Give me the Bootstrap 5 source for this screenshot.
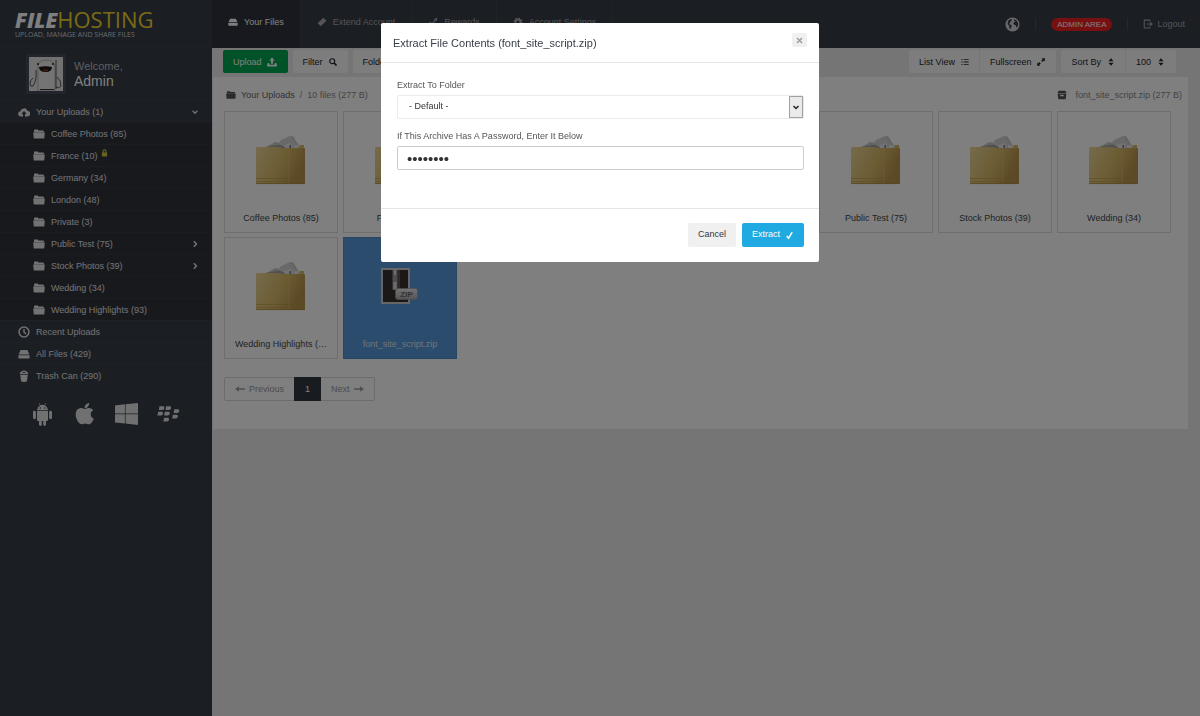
<!DOCTYPE html>
<html lang="en">
<head>
<meta charset="utf-8">
<meta name="viewport" content="width=device-width, initial-scale=1">
<title>FileHosting - Your Files</title>
<link href="https://cdn.jsdelivr.net/npm/bootstrap@5.3.0/dist/css/bootstrap.min.css" rel="stylesheet">
<style>
  body { font-family: "Liberation Sans", Arial, sans-serif; font-size: 9px; line-height: 14px; color: #555; background: #ebebeb; }
  a { text-decoration: none; color: inherit; }
  svg.ico { width: 10px; height: 10px; fill: currentColor; flex: none; }

  /* Sidebar */
  .side { width: 212px; background: #363c46; color: #e4e5e7; }
  .side-head { height: 47px; padding: 9px 15px 0; border-bottom: 1px solid #3e444f; }
  .logo { font: 400 22px/20px "Open Sans", sans-serif; color: #f2d62c; display: block; white-space: nowrap; }
  .logo b { font-weight: 800; font-style: italic; color: #fff; font-size: 21px; }
  .tagline { font: 7px/10px "Open Sans", sans-serif; color: #d4d6d9; white-space: nowrap; }
  .side-user { height: 53px; padding-left: 26px; }
  .avatar { width: 40px; height: 40px; border: 3px solid #454b57; background: #e2e2e2; }
  .side-user .hello { font-size: 11px; line-height: 14px; color: #b9bcc2; }
  .side-user .who { font-size: 14px; line-height: 16px; color: #fff; }
  .side-item { height: 22px; padding: 0 12px 0 18px; border-top: 1px solid #3e444f; }
  .side-item svg.ico { width: 12px; height: 12px; margin-right: 6px; }
  .side-sub { background: #2e323b; }
  .side-sub .side-item { padding-left: 33px; border-color: #363b45; }
  .side-item svg.chev { width: 8px; height: 8px; margin: 0 1px 0 auto; }
  .side-item svg.lock { width: 7px; height: 8px; margin: -6px 0 0 3px; color: #c9c840; }
  .platforms { padding: 16px 31px; gap: 19px; color: #e0e1e3; }
  .platforms svg { width: 23px; height: 24px; fill: currentColor; }
  .platforms .eye { fill: #363c46; }

  /* Top bar */
  .top { height: 48px; background: #363c46; color: #a6aab2; }
  .top .tab { padding: 0 16px 4px; border-right: 1px solid #3e444f; gap: 6px; }
  .top .tab.active { background: #2e333c; color: #fff; }
  .top .side-links { padding-right: 15px; gap: 15px; }
  .pill { background: #f01e22; color: #fff; font-size: 8px; line-height: 13px; padding: 0 6px; border-radius: 7px; }
  .sep { width: 1px; height: 12px; background: #49505c; }

  /* Toolbar */
  .content { margin-right: 12px; }
  .tools { padding: 2px 12px 4px 11px; }
  .tools .set { gap: 5px; }
  .tools .btn { font-size: 9px; line-height: 13px; padding: 1px 11px 0 10px; border: 0; border-radius: 2px; background: #fbfbfb; color: #22272f; display: inline-flex; align-items: center; gap: 6px; height: 23px; }
  .tools .btn svg.ico { width: 8px; height: 8px; }
  .tools .btn-upload { background: #00a651; color: #fff; gap: 5px; }
  .tools .btn-upload svg.ico { width: 10px; height: 10px; }
  .tools .btn-group .btn + .btn { border-left: 1px solid #ebebeb; }

  /* File list */
  .panel { background: #fff; margin-left: 1px; padding: 10px 6px 28px 11px; color: #888; }
  .crumbs { line-height: 16px; padding-left: 2px; margin-bottom: 8px; }
  .crumbs .trail { gap: 5px; }
  .crumbs a { color: #666; }
  .crumbs svg.ico { color: #555; }
  .tiles { gap: 4px 5px; }
  .tile { width: 114px; height: 122px; border: 1px solid #dcdcdc; padding: 20px 10px 0; color: #444; text-align: center; }
  .tile svg { width: 56px; height: 60px; display: block; margin: 0 auto 19px; }
  .tile.active { background: #5799da; border-color: #4f8dc9; color: #dfe6ee; }
  .pagination { --bs-pagination-font-size: 9px; --bs-pagination-padding-x: 10px; --bs-pagination-padding-y: 4px; --bs-pagination-color: #999; --bs-pagination-border-color: #d9d9d9; --bs-pagination-active-bg: #303641; --bs-pagination-active-border-color: #303641; --bs-pagination-border-radius: 2px; margin: 18px 0 0; }
  .page-link { line-height: 14px; display: flex; align-items: center; gap: 4px; }

  /* Extract dialog */
  .modal-dialog { max-width: 438px; margin: 23px auto; }
  .modal-content { border: 0; border-radius: 2px; color: #555; }
  .modal-header { padding: 10px 12px 9px; height: 40px; border-color: #e5e5e5; align-items: flex-start; }
  .modal-title { font-size: 11px; line-height: 20px; color: #373e4a; }
  .btn-x { width: 15px; height: 14px; padding: 0; border: 0; border-radius: 2px; background: #f0f0f1; color: #999; display: flex; align-items: center; justify-content: center; }
  .modal-body { padding: 15px 15px 38px 16px; }
  .modal-body .form-label { margin: 0 0 3px; line-height: 14px; display: block; }
  .modal-body .field { height: 24px; border-radius: 2px; padding: 0 9px; color: #333; }
  .modal-body .form-select { font-size: 9px; border: 1px solid #ebebeb; margin-bottom: 10px; padding-left: 11px;
    background: #fff url("data:image/svg+xml,%3Csvg xmlns='http://www.w3.org/2000/svg' width='14' height='22'%3E%3Crect x='.5' y='.5' width='13' height='21' fill='%23eaeaea' stroke='%23a0a0a0'/%3E%3Cpath d='M4.500 10 7 12.500l2.500-2.500' fill='none' stroke='%23222' stroke-width='1.500'/%3E%3C/svg%3E") no-repeat right 0 center / 14px 22px; }
  .modal-body .form-control { font-size: 15px; border: 1px solid #ccc; }
  .modal-footer { padding: 14px 15px 15px; border-color: #e5e5e5; gap: 6px; }
  .modal-footer .btn { margin: 0; border: 0; border-radius: 2px; font-size: 9px; height: 24px; padding: 0 10px; display: flex; align-items: center; gap: 5px; }
  .modal-footer svg.ico { width: 9px; height: 9px; }
  .btn-cancel { background: #f0f0f1; color: #303641; }
  .btn-extract { background: #21a9e1; color: #fff; }
</style>
</head>
<body>

<svg class="position-absolute" width="0" height="0" aria-hidden="true">
  <defs>
    <linearGradient id="gold" x1="0" y1="0" x2="1" y2=".35"><stop offset="0" stop-color="#ead698"/><stop offset=".6" stop-color="#d8b866"/><stop offset="1" stop-color="#b8924a"/></linearGradient>
    <linearGradient id="steel" x1="0" y1="0" x2="0" y2="1"><stop offset="0" stop-color="#e8e8e8"/><stop offset="1" stop-color="#aaa"/></linearGradient>
  </defs>
  <symbol id="i-drive" viewBox="0 0 12 12"><path d="M2.600 2h6.800L11.400 6.400H.6zM.4 7.200h11.200v2.500q0 .8-.8.8H1.200q-.8 0-.8-.8z"/></symbol>
  <symbol id="i-folder" viewBox="0 0 12 12"><path d="M1 2.300q0-.8.8-.8h2.700q.7 0 .9 1h4.800q.7 0 .7.800V4.200H1zM.2 4.600h11.600l-.5 5.400q0 .6-.7.600H1.400q-.7 0-.7-.6z"/></symbol>
  <symbol id="i-cloud" viewBox="0 0 12 12"><path d="M5 10.500H2.800A2.600 2.600 0 0 1 2.500 5.300 3.600 3.600 0 0 1 9.400 4.700 2.900 2.900 0 0 1 9.300 10.500H7V8h1.700L6 5 3.300 8H5z"/></symbol>
  <symbol id="i-clock" viewBox="0 0 12 12"><path fill-rule="evenodd" d="M6 .3a5.700 5.700 0 1 0 0 11.400A5.700 5.700 0 0 0 6 .3zm0 1.500a4.200 4.200 0 1 1 0 8.400 4.200 4.200 0 0 1 0-8.400zM5.300 3v3.400l2.300 2.100.9-1L6.700 5.800V3z"/></symbol>
  <symbol id="i-trash" viewBox="0 0 12 12"><path fill-rule="evenodd" d="M2 2.700Q6-1.600 10 2.700l.4 1.300H1.600zm2 .2h4Q6 1 4 2.900zM2.200 4.800h7.600L9 10.800Q8.900 12 6 12T3 10.800z"/></symbol>
  <symbol id="i-lock" viewBox="0 0 8 9"><path fill-rule="evenodd" d="M1 4h.6V2.600a2.400 2.400 0 0 1 4.800 0V4H7v4.500H1zm1.900 0h2.200V2.600a1.100 1.100 0 0 0-2.200 0z"/></symbol>
  <symbol id="i-down" viewBox="0 0 10 10"><path d="M2 3.500 5 6.500l3-3" fill="none" stroke="currentColor" stroke-width="1.700"/></symbol>
  <symbol id="i-right" viewBox="0 0 10 10"><path d="M3.500 1.500 6.800 5 3.500 8.500" fill="none" stroke="currentColor" stroke-width="1.900"/></symbol>
  <symbol id="i-ticket" viewBox="0 0 12 12"><path d="M7.600.8 9 2.200Q8.700 3.300 9.800 3l1.400 1.400-6.800 6.800L3 9.800Q3.300 8.700 2.200 9L.8 7.600z"/></symbol>
  <symbol id="i-chart" viewBox="0 0 12 12"><path d="M.5 10.500 2.600 6.400 5 8.300 9 3" fill="none" stroke="currentColor" stroke-width="1.400"/><path d="M7 2.500 11.200.8l-.8 4.400z"/></symbol>
  <symbol id="i-cog" viewBox="0 0 12 12"><circle cx="6" cy="6" r="3" fill="none" stroke="currentColor" stroke-width="2.200"/><circle cx="6" cy="6" r="4.600" fill="none" stroke="currentColor" stroke-width="1.600" stroke-dasharray="1.800 1.810"/></symbol>
  <symbol id="i-globe" viewBox="0 0 16 16"><path fill-rule="evenodd" d="M8 .5a7.500 7.500 0 1 0 0 15 7.500 7.500 0 0 0 0-15zM3 5.200 4 3.400 6.400 2.200l1 .5-.4 1.300-1.800 1.200.3 1.300L4.200 7.400l2.300 1.200.8 1.500-1 1.300-.5 1.900-1.100-1.700-.2-2L3 7.600zM9.800 2.400l2.500 1.200 1.300 2.200.5 2.200-.8 2.400-1.200.8-.6-2.400-2-.7L8.800 6.600 10 5.200l1.200.2-.8-1.200L9.400 3.500z"/></symbol>
  <symbol id="i-logout" viewBox="0 0 12 12"><path d="M8 3V1.300H1.500v9.400H8V9M4.500 6h6M8.600 3.900 10.800 6 8.600 8.100" fill="none" stroke="currentColor" stroke-width="1.300"/></symbol>
  <symbol id="i-upload" viewBox="0 0 12 12"><path d="M6 .5 9.300 4.300H7.200V8H4.800V4.300H2.700zM.3 7.500H3v1.800h6V7.500h2.700v4H.3z"/></symbol>
  <symbol id="i-search" viewBox="0 0 12 12"><circle cx="4.800" cy="4.800" r="3.700" fill="none" stroke="currentColor" stroke-width="1.800"/><path d="m7.400 7.400 3.800 3.800" stroke="currentColor" stroke-width="2.400"/></symbol>
  <symbol id="i-list" viewBox="0 0 12 12"><path d="M.5 1.700h2v1.400h-2zm3.500 0h7.500v1.400H4zM.5 5.300h2v1.400h-2zm3.500 0h7.500v1.400H4zM.5 8.900h2v1.400h-2zm3.500 0h7.500v1.400H4z"/></symbol>
  <symbol id="i-full" viewBox="0 0 12 12"><path d="M7 .5h4.800v4.800L10.300 3.800 8.200 5.900 6.300 4l2.200-2zM5 11.500H.2V6.700l1.500 1.500 2.100-2.100L5.700 8l-2.200 2z"/></symbol>
  <symbol id="i-sort" viewBox="0 0 12 12"><path d="m6 .2 3.800 4.600H2.200zM6 11.800 2.200 7.200h7.600z"/></symbol>
  <symbol id="i-archive" viewBox="0 0 12 12"><path fill-rule="evenodd" d="M2 1h8l1.400 2.600H.6zM.8 4.300h10.400l-.8 6.700H1.600zM4 5.600v2h4v-2z"/></symbol>
  <symbol id="i-check" viewBox="0 0 12 12"><path d="m2.200 6.600 2.600 3 4.800-8" fill="none" stroke="currentColor" stroke-width="2"/></symbol>
  <symbol id="i-prev" viewBox="0 0 12 12"><path d="M4.600 2.800v2.200h7.200v2H4.600v2.200L.2 6z"/></symbol>
  <symbol id="i-next" viewBox="0 0 12 12"><path d="M7.400 2.800v2.200H.2v2h7.200v2.200L11.800 6z"/></symbol>
  <symbol id="i-bigfolder" viewBox="0 0 56 60">
    <path d="M12 16 22 10l6 1 7-6 5-1 8 13z" fill="#c8c8ca"/>
    <path d="M28 8 37 4l9 13H22z" fill="#d2d2d4"/>
    <path d="M12 15 27 12.500l9 5H12z" fill="#a0a0a0"/>
    <path d="M31 13l7-2 2 7h-7zM41 13h4l1 5h-5z" fill="#e6e6ea"/>
    <path d="M36.500 13h1.500v4h-1.500z" fill="#77787c"/>
    <path d="M46.500 13h4.500v5h-4.500z" fill="#d6bb66"/>
    <path d="M3 16q0-1 1-1h22l4 1h21q1 0 1 1v35H3z" fill="url(#gold)"/>
    <path d="M3 46.500h49M3 49.500h49" stroke="#b8954a" stroke-width=".6"/>
    <path d="M36 18v33" stroke="#e0c377" stroke-width=".5"/>
    <path d="M3 51.600h49" stroke="#a88a42" stroke-width=".8"/>
  </symbol>
  <symbol id="i-zip" viewBox="0 0 56 60">
    <path d="M9 10h29v36H9z" fill="#cfcdcd"/><path d="M11 12h25v32H11z" fill="#3a3030"/>
    <path d="M20.500 12h5v20h-5z" fill="#9c9c9c"/><path d="M22 12h2v5h-2zM21.500 24h3v7h-3z" fill="#ddd"/><path d="M26 12h2v20h-2z" fill="#5c5556"/>
    <rect x="23.500" y="30.500" width="22" height="11" rx="2.500" fill="url(#steel)" stroke="#999" stroke-width=".6"/>
    <text x="34.500" y="39" text-anchor="middle" font-family="Liberation Sans" font-size="8" font-weight="bold" fill="#666">ZIP</text>
  </symbol>
</svg>

<div class="d-flex min-vh-100">
  <aside class="side flex-shrink-0">
    <div class="side-head">
      <a href="#" class="logo"><b>FILE</b>HOSTING</a>
      <div class="tagline">UPLOAD, MANAGE AND SHARE FILES</div>
    </div>
    <div class="side-user d-flex align-items-center gap-2">
      <svg class="avatar" viewBox="0 0 34 34" role="img" aria-label="Avatar">
        <path d="M9 34V12Q8 3 17 3t9 9v22z" fill="#e9e9e9" stroke="#999" stroke-width=".7"/>
        <path d="M7 13q1 10-3 16-3 1-3-2 0-4 3-6M27 3v29M28 20q4 3 4 9-2 3-5 1" fill="none" stroke="#444" stroke-width=".9"/>
        <path d="M10 10q6-1.500 13 0 0 5-6.500 5T10 10z" fill="#1c1616"/><path d="M13.500 13q3-1.200 6 0-3 2-6 0z" fill="#c33"/>
        <circle cx="9" cy="7" r="1" fill="#222"/><circle cx="24" cy="7" r="1" fill="#222"/><path d="M11 32.500h14" stroke="#333"/>
      </svg>
      <div><div class="hello">Welcome,</div><div class="who">Admin</div></div>
    </div>
    <nav>
      <a href="#" class="side-item d-flex align-items-center"><svg class="ico"><use href="#i-cloud"/></svg>Your Uploads (1)<svg class="ico chev"><use href="#i-down"/></svg></a>
      <div class="side-sub">
        <a href="#" class="side-item d-flex align-items-center"><svg class="ico"><use href="#i-folder"/></svg>Coffee Photos (85)</a>
        <a href="#" class="side-item d-flex align-items-center"><svg class="ico"><use href="#i-folder"/></svg>France (10)<svg class="ico lock"><use href="#i-lock"/></svg></a>
        <a href="#" class="side-item d-flex align-items-center"><svg class="ico"><use href="#i-folder"/></svg>Germany (34)</a>
        <a href="#" class="side-item d-flex align-items-center"><svg class="ico"><use href="#i-folder"/></svg>London (48)</a>
        <a href="#" class="side-item d-flex align-items-center"><svg class="ico"><use href="#i-folder"/></svg>Private (3)</a>
        <a href="#" class="side-item d-flex align-items-center"><svg class="ico"><use href="#i-folder"/></svg>Public Test (75)<svg class="ico chev"><use href="#i-right"/></svg></a>
        <a href="#" class="side-item d-flex align-items-center"><svg class="ico"><use href="#i-folder"/></svg>Stock Photos (39)<svg class="ico chev"><use href="#i-right"/></svg></a>
        <a href="#" class="side-item d-flex align-items-center"><svg class="ico"><use href="#i-folder"/></svg>Wedding (34)</a>
        <a href="#" class="side-item d-flex align-items-center"><svg class="ico"><use href="#i-folder"/></svg>Wedding Highlights (93)</a>
      </div>
      <a href="#" class="side-item d-flex align-items-center"><svg class="ico"><use href="#i-clock"/></svg>Recent Uploads</a>
      <a href="#" class="side-item d-flex align-items-center"><svg class="ico"><use href="#i-drive"/></svg>All Files (429)</a>
      <a href="#" class="side-item d-flex align-items-center"><svg class="ico"><use href="#i-trash"/></svg>Trash Can (290)</a>
    </nav>
    <div class="platforms d-flex align-items-center">
      <a href="#" aria-label="Android"><svg viewBox="0 0 23 24"><path d="M6 8.200q.3-3.400 3-4.700L7.800 1.300l.5-.3 1.200 2.200q2-.7 4 0L14.700 1l.5.3L14 3.500q2.700 1.300 3 4.700zM6 9h11v9q0 1-1 1h-1v3.500a1.400 1.400 0 0 1-2.800 0V19h-1.400v3.500a1.400 1.400 0 0 1-2.800 0V19H7q-1 0-1-1zM2 10.300a1.400 1.400 0 0 1 2.900 0v5.500a1.400 1.400 0 0 1-2.900 0zM18.100 10.300a1.400 1.400 0 0 1 2.900 0v5.500a1.400 1.400 0 0 1-2.900 0z"/><circle class="eye" cx="9.200" cy="6" r=".7"/><circle class="eye" cx="13.800" cy="6" r=".7"/></svg></a>
      <a href="#" aria-label="Apple"><svg viewBox="-52 16 480 495"><path d="M318.700 268.700c-.2-36.700 16.400-64.400 50-84.800-18.800-26.900-47.200-41.700-84.700-44.600-35.500-2.800-74.300 20.700-88.500 20.700-15 0-49.400-19.700-76.400-19.700C63.300 141.200 4 184.800 4 273.500q0 39.300 14.400 81.200c12.800 36.700 59 126.700 107.200 125.200 25.200-.6 43-17.900 75.800-17.900 31.800 0 48.300 17.900 76.400 17.900 48.600-.7 90.400-82.500 102.600-119.300-65.200-30.700-61.700-90-61.700-91.900zm-56.600-164.200c27.300-32.400 24.800-61.900 24-72.500-24.100 1.400-52 16.400-67.900 34.900-17.500 19.800-27.800 44.300-25.600 71.900 26.100 2 49.900-11.400 69.500-34.300z"/></svg></a>
      <a href="#" aria-label="Windows"><svg viewBox="0 0 23 24"><path d="M0 3.400 9.900 2.300v9.200H0zM10.600 2.200 23 .9v10.600H10.600zM0 12.300h9.900v9.200L0 20.400zM10.600 12.300H23v10.600l-12.400-1.300z"/></svg></a>
      <a href="#" aria-label="BlackBerry"><svg viewBox="0 0 23 24"><path d="M2.500 4.200h3.700q1.500 0 1.200 2T5 8H1.800zM9.200 4.200h3.700q1.500 0 1.200 2T11.700 8H8.500zM1.100 9.800h3.700q1.500 0 1.200 2t-2.400 1.800H.4zM7.900 9.800h3.700q1.500 0 1.200 2t-2.400 1.800H7.200zM17.300 7.200H21q1.500 0 1.200 2T19.800 11h-3.200zM15.900 12.800h3.700q1.500 0 1.200 2t-2.400 1.800h-3.200zM7.100 15.800h3.700q1.500 0 1.200 2t-2.400 1.800H6.400z"/></svg></a>
    </div>
  </aside>

  <div class="flex-grow-1 overflow-hidden">
    <header class="top d-flex justify-content-between">
      <nav class="d-flex">
        <a href="#" class="tab active d-flex align-items-center"><svg class="ico"><use href="#i-drive"/></svg>Your Files</a>
        <a href="#" class="tab d-flex align-items-center"><svg class="ico"><use href="#i-ticket"/></svg>Extend Account</a>
        <a href="#" class="tab d-flex align-items-center"><svg class="ico"><use href="#i-chart"/></svg>Rewards</a>
        <a href="#" class="tab d-flex align-items-center"><svg class="ico"><use href="#i-cog"/></svg>Account Settings</a>
      </nav>
      <div class="side-links d-flex align-items-center">
        <a href="#" aria-label="Language"><svg width="15" height="15" fill="#d0d2d6" class="d-block"><use href="#i-globe"/></svg></a>
        <span class="sep"></span>
        <a href="#" class="pill">ADMIN AREA</a>
        <span class="sep"></span>
        <a href="#" class="d-flex align-items-center gap-1"><svg class="ico"><use href="#i-logout"/></svg>Logout</a>
      </div>
    </header>

    <main class="content">
      <div class="tools d-flex justify-content-between">
        <div class="set d-flex">
          <button type="button" class="btn btn-upload">Upload <svg class="ico"><use href="#i-upload"/></svg></button>
          <button type="button" class="btn">Filter <svg class="ico"><use href="#i-search"/></svg></button>
          <button type="button" class="btn">Folder <svg class="ico"><use href="#i-folder"/></svg></button>
        </div>
        <div class="set d-flex">
          <div class="btn-group">
            <button type="button" class="btn">List View <svg class="ico"><use href="#i-list"/></svg></button>
            <button type="button" class="btn">Fullscreen <svg class="ico"><use href="#i-full"/></svg></button>
          </div>
          <div class="btn-group">
            <button type="button" class="btn">Sort By <svg class="ico"><use href="#i-sort"/></svg></button>
            <button type="button" class="btn">100 <svg class="ico"><use href="#i-sort"/></svg></button>
          </div>
        </div>
      </div>

      <section class="panel">
        <div class="crumbs d-flex align-items-center justify-content-between">
          <div class="trail d-flex align-items-center"><svg class="ico"><use href="#i-folder"/></svg><a href="#">Your Uploads</a><span>/</span><span>10 files (277 B)</span></div>
          <div class="d-flex align-items-center gap-2"><svg class="ico"><use href="#i-archive"/></svg>font_site_script.zip (277 B)</div>
        </div>
        <div class="tiles d-flex flex-wrap">
          <a href="#" class="tile"><svg><use href="#i-bigfolder"/></svg><div class="text-truncate">Coffee Photos (85)</div></a>
          <a href="#" class="tile"><svg><use href="#i-bigfolder"/></svg><div class="text-truncate">France (10)</div></a>
          <a href="#" class="tile"><svg><use href="#i-bigfolder"/></svg><div class="text-truncate">Germany (34)</div></a>
          <a href="#" class="tile"><svg><use href="#i-bigfolder"/></svg><div class="text-truncate">London (48)</div></a>
          <a href="#" class="tile"><svg><use href="#i-bigfolder"/></svg><div class="text-truncate">Private (3)</div></a>
          <a href="#" class="tile"><svg><use href="#i-bigfolder"/></svg><div class="text-truncate">Public Test (75)</div></a>
          <a href="#" class="tile"><svg><use href="#i-bigfolder"/></svg><div class="text-truncate">Stock Photos (39)</div></a>
          <a href="#" class="tile"><svg><use href="#i-bigfolder"/></svg><div class="text-truncate">Wedding (34)</div></a>
          <a href="#" class="tile"><svg><use href="#i-bigfolder"/></svg><div class="text-truncate">Wedding Highlights (93)</div></a>
          <a href="#" class="tile active"><svg><use href="#i-zip"/></svg><div class="text-truncate">font_site_script.zip</div></a>
        </div>
        <ul class="pagination">
          <li class="page-item"><a class="page-link" href="#"><svg class="ico"><use href="#i-prev"/></svg>Previous</a></li>
          <li class="page-item active"><a class="page-link" href="#">1</a></li>
          <li class="page-item"><a class="page-link" href="#">Next<svg class="ico"><use href="#i-next"/></svg></a></li>
        </ul>
      </section>
    </main>
  </div>
</div>

<div class="modal-backdrop show"></div>
<div class="modal show d-block" tabindex="-1" role="dialog" aria-labelledby="extractTitle">
  <div class="modal-dialog">
    <form class="modal-content">
      <div class="modal-header">
        <h4 class="modal-title fw-normal" id="extractTitle">Extract File Contents (font_site_script.zip)</h4>
        <button type="button" class="btn-x" aria-label="Close"><svg width="7" height="7" viewBox="0 0 7 7"><path d="m1 1 5 5M6 1 1 6" stroke="currentColor" stroke-width="1.300"/></svg></button>
      </div>
      <div class="modal-body">
        <label class="form-label" for="folder">Extract To Folder</label>
        <select class="form-select field" id="folder"><option>- Default -</option></select>
        <label class="form-label" for="password">If This Archive Has A Password, Enter It Below</label>
        <input class="form-control field" type="password" id="password" value="password">
      </div>
      <div class="modal-footer">
        <button type="button" class="btn btn-cancel">Cancel</button>
        <button type="button" class="btn btn-extract">Extract <svg class="ico"><use href="#i-check"/></svg></button>
      </div>
    </form>
  </div>
</div>

<script src="https://cdn.jsdelivr.net/npm/bootstrap@5.3.0/dist/js/bootstrap.bundle.min.js"></script>
</body>
</html>
